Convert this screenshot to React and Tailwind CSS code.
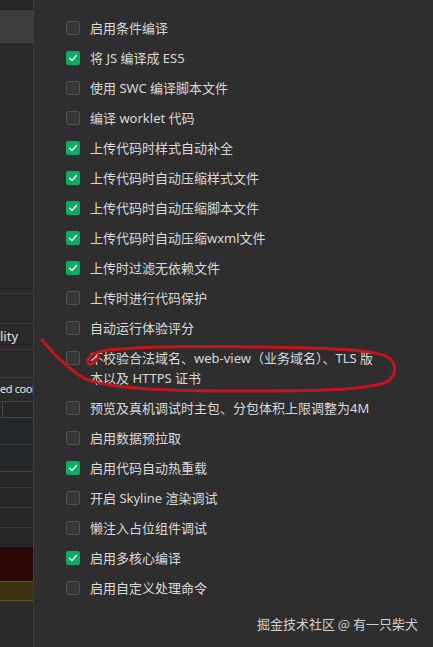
import React from 'react';

const options = [
  { label: '启用条件编译', checked: false },
  { label: '将 JS 编译成 ES5', checked: true },
  { label: '使用 SWC 编译脚本文件', checked: false },
  { label: '编译 worklet 代码', checked: false },
  { label: '上传代码时样式自动补全', checked: true },
  { label: '上传代码时自动压缩样式文件', checked: true },
  { label: '上传代码时自动压缩脚本文件', checked: true },
  { label: '上传代码时自动压缩wxml文件', checked: true },
  { label: '上传时过滤无依赖文件', checked: true },
  { label: '上传时进行代码保护', checked: false },
  { label: '自动运行体验评分', checked: false },
  { label: ['不校验合法域名、web-view（业务域名）、TLS 版', '本以及 HTTPS 证书'], checked: false },
  { label: '预览及真机调试时主包、分包体积上限调整为4M', checked: false },
  { label: '启用数据预拉取', checked: false },
  { label: '启用代码自动热重载', checked: true },
  { label: '开启 Skyline 渲染调试', checked: false },
  { label: '懒注入占位组件调试', checked: false },
  { label: '启用多核心编译', checked: true },
  { label: '启用自定义处理命令', checked: false },
];

function Checkbox({ checked }) {
  if (checked) {
    return (
      <span className="mt-[3px] flex h-[14px] w-[14px] shrink-0 items-center justify-center rounded-[2px] bg-[#0aae62]">
        <svg width="10" height="10" viewBox="0 0 10 10" fill="none">
          <path d="M1.6 5.2 L4 7.5 L8.4 2.6" stroke="#ffffff" strokeWidth="1.5" strokeLinecap="round" strokeLinejoin="round" />
        </svg>
      </span>
    );
  }
  return <span className="mt-[3px] block h-[14px] w-[14px] shrink-0 rounded-[2px] border border-[#525252] bg-[#373737]" />;
}

function SidePanel() {
  return (
    <aside className="flex w-[33px] shrink-0 flex-col overflow-hidden bg-[#2a2a2a] text-[13px] text-[#e2e2e2] [font-family:'Noto_Sans',sans-serif]">
      <div className="h-[9px] bg-[#262626]" />
      <div className="h-px bg-[#202020]" />
      <div className="h-[33px] bg-[#3d3d3d]" />
      <div className="h-[250px]" />
      <div className="h-px bg-[#3a3a3a]" />
      <div className="h-[29px]" />
      <div className="h-px bg-[#3a3a3a]" />
      <div className="flex h-[25px] items-center">lity</div>
      <div className="h-px bg-[#3a3a3a]" />
      <div className="h-[27px]" />
      <div className="h-px bg-[#3a3a3a]" />
      <div className="flex h-[23px] items-center whitespace-nowrap text-[11px] tracking-[-0.4px]">ed cool</div>
      <div className="h-px bg-[#444444]" />
      <div className="flex h-[15px] bg-[#262626]">
        <span className="w-[3px] border-r border-[#4a4a4a]" />
      </div>
      <div className="h-px bg-[#444444]" />
      <div className="h-[26px] bg-[#23272a]" />
      <div className="h-px bg-[#3a3a3a]" />
      <div className="h-[26px] bg-[#25282b]" />
      <div className="h-px bg-[#444444]" />
      <div className="h-[15px] bg-[#262626]" />
      <div className="h-px bg-[#3a3a3a]" />
      <div className="h-[19px] bg-[#262626]" />
      <div className="h-px bg-[#3a3a3a]" />
      <div className="h-[19px] bg-[#262626]" />
      <div className="h-px bg-[#3a3a3a]" />
      <div className="h-[19px] bg-[#262626]" />
      <div className="h-[34px] bg-[#2a0606]" />
      <div className="h-px bg-[#5a5020]" />
      <div className="h-[18px] bg-[#3a3410]" />
      <div className="h-px bg-[#55502a]" />
      <div className="flex-1 bg-[#2a2a2a]" />
    </aside>
  );
}

export default function App() {
  return (
    <div className="relative flex h-[647px] w-full overflow-hidden bg-[#2e2e2e]">
      <SidePanel />
      <div className="w-px bg-[#3e3e3e]" />
      <main className="relative flex-1 pl-[32px] pt-[13px] [font-family:'Noto_Sans','Noto_Sans_CJK_SC',sans-serif]">
        <ul className="flex flex-col">
          {options.map((opt, i) => (
            <li key={i} className="flex items-start gap-[10px] py-[5px] text-[13px] leading-[20px] text-[#dadada]">
              <Checkbox checked={opt.checked} />
              <span className="whitespace-nowrap">
                {Array.isArray(opt.label) ? (
                  <>
                    {opt.label[0]}
                    <br />
                    {opt.label[1]}
                  </>
                ) : (
                  opt.label
                )}
              </span>
            </li>
          ))}
        </ul>
        <div className="absolute bottom-[14px] right-[15px] text-[13px] text-[#d2d2d2] [font-family:'Noto_Sans_CJK_SC',sans-serif]">
          掘金技术社区 @ 有一只柴犬
        </div>
      </main>
      {/* red hand-drawn mark over the TLS option */}
      <svg className="pointer-events-none absolute left-0 top-0" width="433" height="647" viewBox="0 0 433 647" fill="none">
        <path
          d="M42 340 C52 352 66 368 84 378 C100 387 150 391 230 391 C300 391 360 391 384 383 C398 377 398 363 386 356 C370 349 320 348 260 347 C200 346 140 347 108 350 C94 352 86 357 88 363 C90 367 95 362 99 357"
          stroke="#c5141c"
          strokeWidth="3"
          strokeLinecap="round"
          strokeLinejoin="round"
        />
      </svg>
    </div>
  );
}
